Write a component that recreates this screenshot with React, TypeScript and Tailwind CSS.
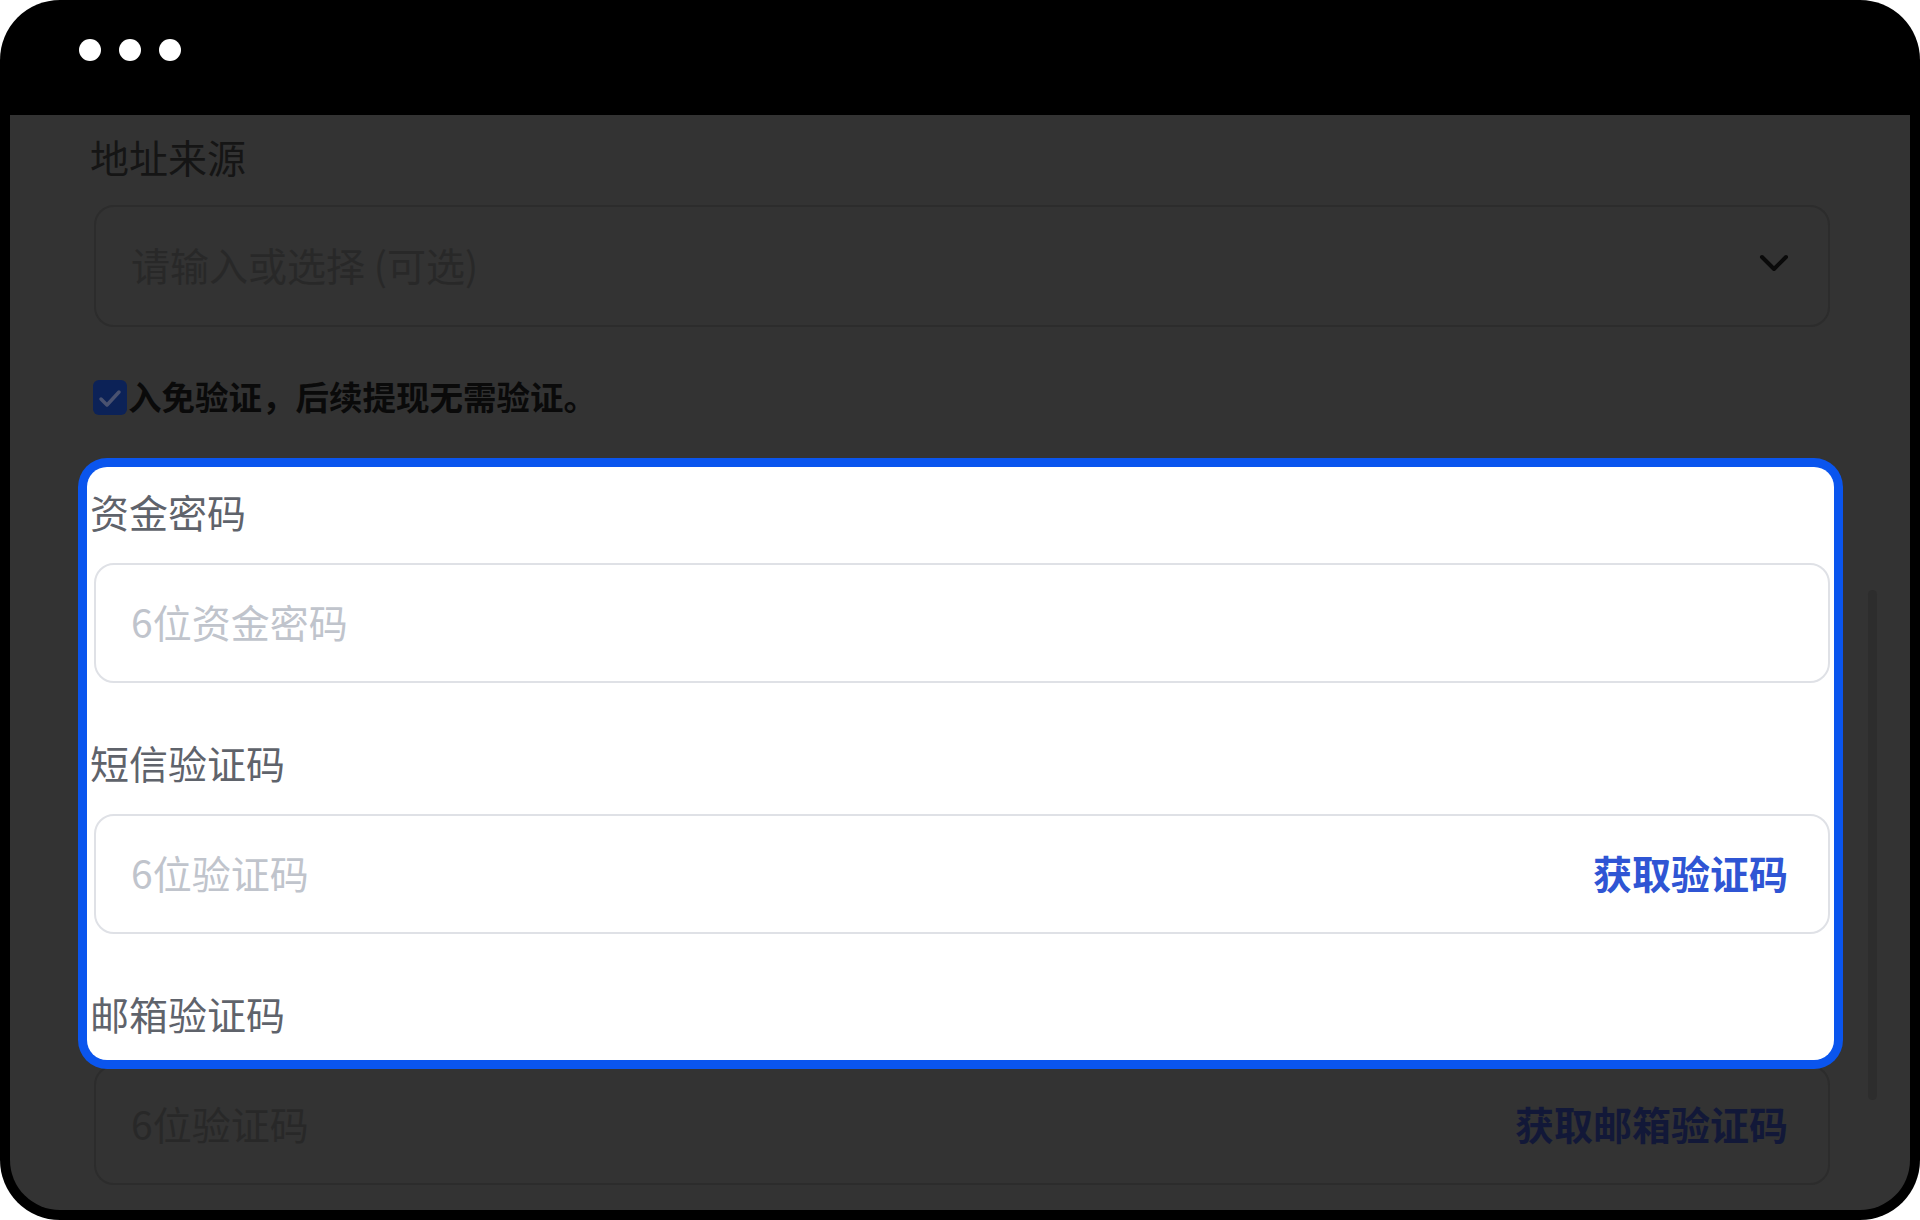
import React from "react";

function Dots() {
  return (
    <div className="flex h-[115px] shrink-0 items-start gap-[18px] pl-[69px] pt-[39px]">
      <span className="block h-[22px] w-[22px] rounded-full bg-white" />
      <span className="block h-[22px] w-[22px] rounded-full bg-white" />
      <span className="block h-[22px] w-[22px] rounded-full bg-white" />
    </div>
  );
}

export default function App() {
  return (
    <div className="h-[1220px] w-[1920px] bg-white font-['Noto_Sans_CJK_SC','Noto_Sans',sans-serif]">
      <div className="flex h-full w-full flex-col rounded-[60px] bg-black px-[10px] pb-[10px]">
        <Dots />
        <div className="relative flex-1 overflow-hidden rounded-b-[50px] bg-[#333333] pl-[84px] pr-[80px] pt-[18px]">
          {/* dimmed scrollbar */}
          <div className="absolute right-[33px] top-[475px] h-[510px] w-[9px] rounded-full bg-[#2d2d2d]" />

          <div className="flex flex-col">
            {/* 地址来源 */}
            <div className="-ml-[4px] text-[39px] leading-[47px] text-[#151515]">地址来源</div>
            <div className="mt-[25px] flex h-[122px] items-center justify-between rounded-[20px] border-2 border-[#2c2c2c] pb-[5px] pl-[35px] pr-[38px]">
              <span className="text-[39px] leading-[50px] text-[#282828]">请输入或选择 (可选)</span>
              <svg width="32" height="20" viewBox="0 0 32 20" fill="none">
                <polyline points="4,3 16,15 28,3" stroke="#0a0a0a" strokeWidth="4" strokeLinecap="round" strokeLinejoin="round" />
              </svg>
            </div>

            {/* checkbox row */}
            <div className="mt-[53px] flex h-[35px] items-center">
              <span className="-ml-[1px] flex h-[35px] w-[34px] shrink-0 items-center justify-center rounded-[6px] bg-[#0c2257]">
                <svg width="34" height="35" viewBox="0 0 34 35" fill="none">
                  <polyline points="8,19 14,25 26,12" stroke="#4a5270" strokeWidth="3.5" strokeLinecap="round" strokeLinejoin="round" />
                </svg>
              </span>
              <span className="ml-[1px] -translate-y-[2px] text-[33.5px] font-semibold leading-[35px] text-[#0a0a0a]">入免验证，后续提现无需验证。</span>
            </div>

            {/* highlighted section */}
            <div className="relative z-10 -ml-[7px] -mr-[4px] mt-[52px] rounded-[20px] bg-white pb-[23px] pl-[7px] pr-[4px] pt-[21px] shadow-[0_0_0_9px_#0a55ee]">
              <div className="-ml-[4px] text-[39px] leading-[47px] text-[#5f636b]">资金密码</div>
              <div className="mt-[28px] flex h-[120px] items-center rounded-[20px] border-2 border-[#dfe1e6] pb-[5px] pl-[35px] pr-[40px]">
                <span className="text-[39px] leading-[50px] text-[#c0c4cc]">6位资金密码</span>
              </div>

              <div className="-ml-[4px] mt-[56px] text-[39px] leading-[47px] text-[#5f636b]">短信验证码</div>
              <div className="mt-[28px] flex h-[120px] items-center justify-between rounded-[20px] border-2 border-[#dfe1e6] pb-[5px] pl-[35px] pr-[40px]">
                <span className="text-[39px] leading-[50px] text-[#c0c4cc]">6位验证码</span>
                <span className="text-[39px] font-semibold leading-[50px] text-[#2f55d4]">获取验证码</span>
              </div>

              <div className="-ml-[4px] mt-[56px] text-[39px] leading-[47px] text-[#5f636b]">邮箱验证码</div>
            </div>

            {/* dimmed input below */}
            <div className="mt-[5px] flex h-[120px] shrink-0 items-center justify-between rounded-[20px] border-2 border-[#2c2c2c] pb-[5px] pl-[35px] pr-[40px]">
              <span className="text-[39px] leading-[50px] text-[#282828]">6位验证码</span>
              <span className="text-[39px] font-semibold leading-[50px] text-[#121838]">获取邮箱验证码</span>
            </div>
          </div>
        </div>
      </div>
    </div>
  );
}
